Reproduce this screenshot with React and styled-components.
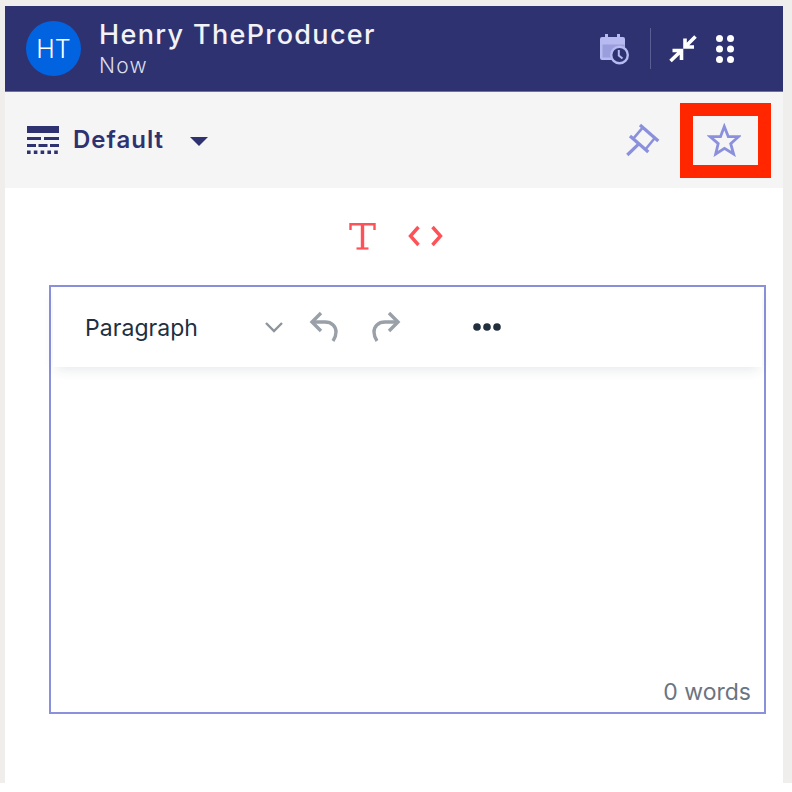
import React from 'react';
import styled, { createGlobalStyle } from 'styled-components';

const GlobalStyle = createGlobalStyle`
  html, body {
    margin: 0;
    padding: 0;
    background: #fff;
  }
`;

const Page = styled.div`
  width: 792px;
  height: 792px;
  overflow: hidden;
  background: linear-gradient(#efeeec, #efeeec) no-repeat top left / 100% 783px;
  padding: 6px 9px 0 5px;
  box-sizing: border-box;
  font-family: Inter, "Liberation Sans", sans-serif;
`;

const Panel = styled.div`
  position: relative;
  height: 777px;
  background: #fff;
`;

const Header = styled.header`
  height: 86px;
  box-sizing: border-box;
  background: #2e3270;
  border-bottom: 1px solid #6d70a0;
  display: flex;
  align-items: center;
  padding: 0 49px 0 21px;
`;

const Avatar = styled.div`
  width: 55px;
  height: 55px;
  border-radius: 50%;
  background: #0263e0;
  color: #fff;
  font-size: 25px;
  font-weight: 300;
  display: flex;
  align-items: center;
  justify-content: center;
`;

const Who = styled.div`
  margin-left: 18px;
  flex: 1;
  color: #fff;
`;

const Name = styled.div`
  font-size: 27px;
  font-weight: 500;
  line-height: 32px;
  letter-spacing: 1.35px;
  color: #f3f3f6;
`;

const When = styled.div`
  font-size: 21px;
  font-weight: 300;
  line-height: 26px;
  letter-spacing: 1.2px;
  margin-top: 2px;
  color: #dcdcea;
`;

const HeaderTools = styled.div`
  display: flex;
  align-items: center;
`;

const Divider = styled.div`
  width: 1px;
  height: 41px;
  background: #5a5e92;
  margin: 0 18px 0 20px;
`;

const GridSlot = styled.div`
  display: flex;
  margin-left: 19px;
`;

const Toolbar = styled.div`
  height: 96px;
  box-sizing: border-box;
  background: #f5f5f5;
  display: flex;
  align-items: center;
  padding: 0 42px 0 22px;
`;

const ViewLabel = styled.div`
  margin-left: 14px;
  margin-top: -2px;
  font-size: 24px;
  font-weight: 600;
  letter-spacing: 1px;
  color: #2e3270;
`;

const Caret = styled.div`
  margin-left: 26px;
  margin-top: 3px;
  width: 0;
  height: 0;
  border-left: 9px solid transparent;
  border-right: 9px solid transparent;
  border-top: 9px solid #2e3270;
`;

const Spacer = styled.div`
  flex: 1;
`;

const StarSlot = styled.div`
  margin-left: 47px;
  display: flex;
`;

const Highlight = styled.div`
  position: absolute;
  left: 675px;
  top: 97px;
  width: 91px;
  height: 75px;
  box-sizing: border-box;
  border: 13px solid #ff2600;
`;

const ModeTabs = styled.div`
  display: flex;
  justify-content: center;
  align-items: center;
  gap: 32px;
  margin: 29px 0 0 4px;
  height: 38px;
`;

const Editor = styled.div`
  margin: 30px 17px 0 44px;
  height: 429px;
  box-sizing: border-box;
  border: 2px solid #8b90dc;
  display: flex;
  flex-direction: column;
`;

const EditorBar = styled.div`
  height: 80px;
  margin: 0 2px;
  box-sizing: border-box;
  background: #fff;
  box-shadow: 0 5px 12px -3px rgba(34, 47, 62, 0.12);
  display: flex;
  align-items: center;
  padding: 0 0 0 32px;
`;

const BlockSelect = styled.div`
  width: 179px;
  margin-top: 2px;
  font-size: 23px;
  letter-spacing: 0.05px;
  color: #222f3e;
`;

const EditorBody = styled.div`
  flex: 1;
`;

const WordCount = styled.div`
  text-align: right;
  padding: 0 13px 5px 0;
  font-size: 23px;
  line-height: 30px;
  color: #6b7480;
`;

const UndoGroup = styled.div`
  display: flex;
  align-items: center;
  gap: 32px;
  margin-left: 25px;
`;

const MoreSlot = styled.div`
  display: flex;
  margin-left: 71px;
`;

const CalendarIcon = () => (
  <svg width="32" height="32" viewBox="0 0 32 32">
    <path d="M2 6a2 2 0 0 1 2-2h3V1h3v3h9V1h3v3h3a2 2 0 0 1 2 2v9a9 9 0 0 0-12 12H4a2 2 0 0 1-2-2z" fill="#b6baf0" />
    <path d="M4.500 11.500h22v4a9 9 0 0 0-10 9h-12z" fill="#9a9edc" />
    <circle cx="21.500" cy="22" r="8.300" fill="#2e3270" stroke="#b6baf0" strokeWidth="2.400" />
    <path d="M20.800 17v5.500l3.700 3" fill="none" stroke="#b6baf0" strokeWidth="2" />
  </svg>
);

const CollapseIcon = () => (
  <svg width="28" height="28" viewBox="0 0 28 28" fill="none" stroke="#fff" strokeWidth="3.600">
    <path d="M26.500 1.500L16 12M16 3.500V12h9" />
    <path d="M1.500 26L12.500 15.500M3.500 15.500h9V25" />
  </svg>
);

const GridIcon = () => (
  <svg width="18" height="28" viewBox="0 0 18 28" fill="#fff">
    {[3.5, 14, 24.5].map((cy) => (
      <g key={cy}>
        <circle cx="3.500" cy={cy} r="3.500" />
        <circle cx="14.500" cy={cy} r="3.500" />
      </g>
    ))}
  </svg>
);

const TableIcon = () => (
  <svg width="32" height="28" viewBox="0 0 32 28" fill="#2e3270">
    <rect x="0" y="0" width="32" height="7" />
    <rect x="0" y="11" width="14" height="3" />
    <rect x="17" y="11" width="15" height="3" />
    <rect x="0" y="18" width="9" height="3" />
    <rect x="11.500" y="18" width="9" height="3" />
    <rect x="23" y="18" width="9" height="3" />
    {[0, 6.8, 13.6, 20.4, 27.2].map((x) => (
      <rect key={x} x={x} y="24.500" width="3.600" height="3.500" />
    ))}
  </svg>
);

const PinIcon = () => (
  <svg width="34" height="34" viewBox="0 0 34 34" fill="none" stroke="#8b90dc" strokeWidth="3.200">
    <path d="M14 2l18.300 16" />
    <path d="M4 13l18.300 16" />
    <path d="M1.300 32l11-10.700" />
    <path d="M16.700 4.700L7.300 15.700M29 14.700l-9 11" strokeWidth="2.600" />
  </svg>
);

const StarIcon = () => (
  <svg width="34" height="34" viewBox="0 0 34 34" fill="none" stroke="#8b90dc" strokeWidth="2.800">
    <path d="M17.300 3.500L21.300 13.700H31.500L23.700 20.600 26.600 31 17.500 25.300 8.700 31 11.200 20.600 3.300 13.700H13.500Z" />
  </svg>
);

const SerifT = () => (
  <svg width="27" height="28" viewBox="0 0 27 28" fill="none" stroke="#fd5257">
    <path d="M1.500 8V2.200h24V8" strokeWidth="2.400" />
    <path d="M13.500 2v24" strokeWidth="3.400" />
    <path d="M7.500 26.500h12" strokeWidth="2.200" />
  </svg>
);

const CodeIcon = () => (
  <svg width="35" height="22" viewBox="0 0 35 22" fill="none" stroke="#fd5257" strokeWidth="3.400">
    <path d="M10.500 2L2.500 11l8 9M24.500 2l8 9-8 9" />
  </svg>
);

const Chevron = () => (
  <svg width="20" height="12" viewBox="0 0 20 12" fill="none" stroke="#8d949c" strokeWidth="2.400">
    <path d="M2 2l8 8 8-8" />
  </svg>
);

const FlipWrap = styled.div`
  display: flex;
  transform: ${({ $flip }) => ($flip ? 'scaleX(-1)' : 'none')};
`;

const UndoIcon = ({ flip }) => (
  <FlipWrap $flip={flip}>
    <svg width="30" height="32" viewBox="0 0 30 32" fill="none" stroke="#99a0a8" strokeWidth="3.400">
      <path d="M12 2L3 11l9 9" />
      <path d="M3 11h13c7 0 11 4.500 11 10 0 4-1 6-3 9" />
    </svg>
  </FlipWrap>
);

const MoreIcon = () => (
  <svg width="30" height="10" viewBox="0 0 30 10" fill="#222f3e">
    <circle cx="5" cy="5" r="3.800" />
    <circle cx="15" cy="5" r="3.800" />
    <circle cx="25" cy="5" r="3.800" />
  </svg>
);

const App = () => (
  <Page>
    <GlobalStyle />
    <Panel>
      <Header>
        <Avatar>HT</Avatar>
        <Who>
          <Name>Henry TheProducer</Name>
          <When>Now</When>
        </Who>
        <HeaderTools>
          <CalendarIcon />
          <Divider />
          <CollapseIcon />
          <GridSlot>
            <GridIcon />
          </GridSlot>
        </HeaderTools>
      </Header>
      <Toolbar>
        <TableIcon />
        <ViewLabel>Default</ViewLabel>
        <Caret />
        <Spacer />
        <PinIcon />
        <StarSlot>
          <StarIcon />
        </StarSlot>
      </Toolbar>
      <Highlight />
      <ModeTabs>
        <SerifT />
        <CodeIcon />
      </ModeTabs>
      <Editor>
        <EditorBar>
          <BlockSelect>Paragraph</BlockSelect>
          <Chevron />
          <UndoGroup>
            <UndoIcon />
            <UndoIcon flip />
          </UndoGroup>
          <MoreSlot>
            <MoreIcon />
          </MoreSlot>
        </EditorBar>
        <EditorBody />
        <WordCount>0 words</WordCount>
      </Editor>
    </Panel>
  </Page>
);

export default App;
